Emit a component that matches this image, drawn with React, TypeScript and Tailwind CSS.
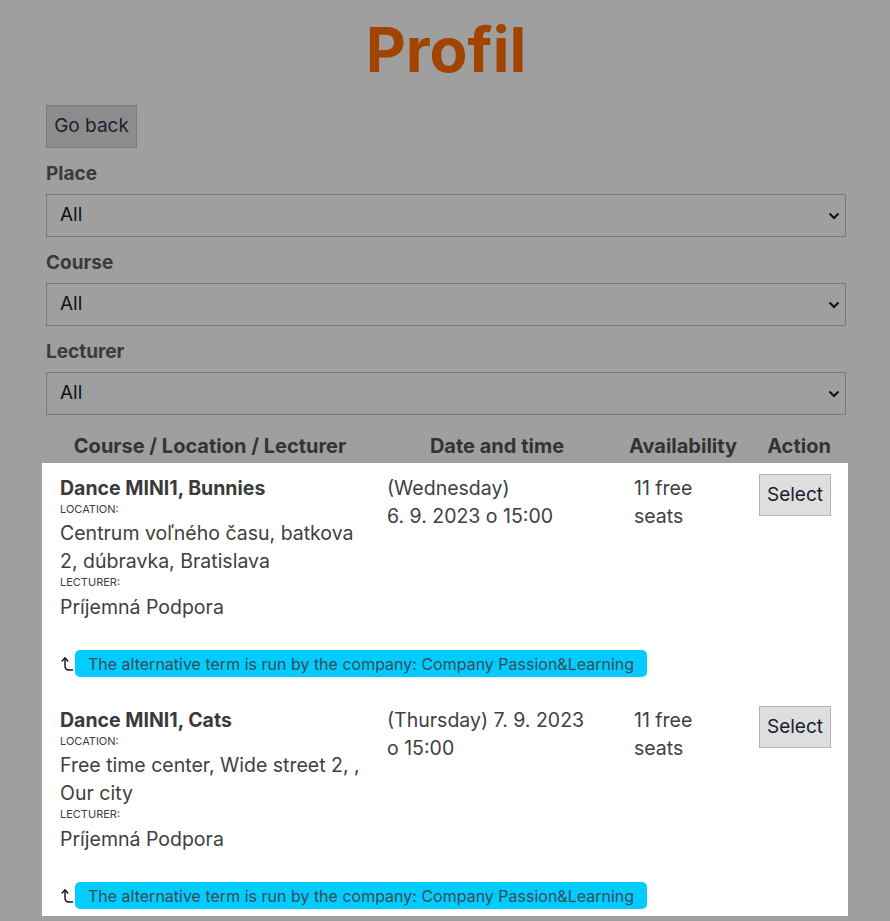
import React from "react";

const font = { fontFamily: "Inter, 'Noto Sans', sans-serif" };

function Chevron() {
  return (
    <svg className="pointer-events-none absolute right-[6px] top-1/2 -translate-y-1/2" width="12" height="8" viewBox="0 0 12 8">
      <path d="M1.5 1.5 L6 6 L10.5 1.5" fill="none" stroke="#111" strokeWidth="2" />
    </svg>
  );
}

function Filter({ label }: { label: string }) {
  return (
    <div className="mt-[13px]">
      <div className="text-[19px] font-bold leading-[26px] text-[#3a3a3a]">{label}</div>
      <div className="relative mt-[7px]">
        <select className="block h-[43px] w-full appearance-none border border-[#7a7a7a] bg-transparent pl-[13px] text-[19px] text-[#111]">
          <option>All</option>
        </select>
        <Chevron />
      </div>
    </div>
  );
}

function BackArrow() {
  return (
    <svg width="13" height="16" viewBox="0 0 13 16" className="shrink-0">
      <path d="M4 2 V10 Q4 14 8 14 H12" fill="none" stroke="#111" strokeWidth="1.4" />
      <path d="M0.8 5.5 L4 1.8 L7.2 5.5" fill="none" stroke="#111" strokeWidth="1.4" />
    </svg>
  );
}

type Term = {
  course: string;
  location: string[];
  lecturer: string;
  date: string[];
};

const terms: Term[] = [
  {
    course: "Dance MINI1, Bunnies",
    location: ["Centrum voľného času, batkova", "2, dúbravka, Bratislava"],
    lecturer: "Príjemná Podpora",
    date: ["(Wednesday)", "6. 9. 2023 o 15:00"],
  },
  {
    course: "Dance MINI1, Cats",
    location: ["Free time center, Wide street 2, ,", "Our city"],
    lecturer: "Príjemná Podpora",
    date: ["(Thursday) 7. 9. 2023", "o 15:00"],
  },
];

function TermRow({ term, first }: { term: Term; first: boolean }) {
  return (
    <div className={first ? "pt-[11px]" : "pt-[11px] mt-[18px]"}>
      <div className="grid grid-cols-[336px_238px_134px_98px]">
        <div className="pl-[18px] text-[19.5px] leading-[28px] text-[#404040]">
          <div className="font-bold text-[#3a3a3a]">{term.course}</div>
          <div className="text-[11px] leading-[14px] uppercase">Location:</div>
          <div className="mt-[3px]">
            {term.location.map((l) => (
              <div key={l}>{l}</div>
            ))}
          </div>
          <div className="text-[11px] leading-[14px] uppercase">Lecturer:</div>
          <div className="mt-[4px]">{term.lecturer}</div>
        </div>
        <div className="pl-[9px] text-[19.5px] leading-[28px] text-[#404040]">
          {term.date.map((d) => (
            <div key={d}>{d}</div>
          ))}
        </div>
        <div className="pl-[18px] text-[19.5px] leading-[28px] text-[#404040]">
          <div>11 free</div>
          <div>seats</div>
        </div>
        <div className="pl-[9px]">
          <button className="h-[42px] w-[72px] border border-[#b0b3ba] bg-[#dedede] text-[19px] text-[#1a2030]">
            Select
          </button>
        </div>
      </div>
      <div className="mt-[29px] flex items-center gap-[1px] pl-[19px]">
        <BackArrow />
        <span className="flex h-[27px] items-center rounded-[5px] bg-[#00ccff] pl-[13px] pr-[13px] text-[16px] text-[#3f4a55]">
          The alternative term is run by the company: Company Passion&amp;Learning
        </span>
      </div>
    </div>
  );
}

export default function App() {
  return (
    <div className="min-h-[921px] bg-[#9f9f9f]" style={font}>
      <div className="pl-[46px] pr-[44px] pb-[6px]">
        <h1 className="pt-[14px] text-center text-[62px] font-bold leading-[72px] text-[#a04400]">Profil</h1>
        <button className="mt-[19px] h-[43px] w-[91px] border border-[#7b7b7b] bg-[#8c8c8c] text-[19px] text-[#1a2030]">
          Go back
        </button>
        <Filter label="Place" />
        <Filter label="Course" />
        <Filter label="Lecturer" />
        <div className="ml-[-4px] mt-[14px] w-[806px]">
          <div className="grid h-[34px] grid-cols-[336px_238px_134px_98px] items-center text-center text-[20px] font-bold text-[#333]">
            <div>Course / Location / Lecturer</div>
            <div>Date and time</div>
            <div>Availability</div>
            <div>Action</div>
          </div>
          <div className="bg-white pb-[7px]">
            {terms.map((t, i) => (
              <TermRow key={t.course} term={t} first={i === 0} />
            ))}
          </div>
        </div>
      </div>
    </div>
  );
}
